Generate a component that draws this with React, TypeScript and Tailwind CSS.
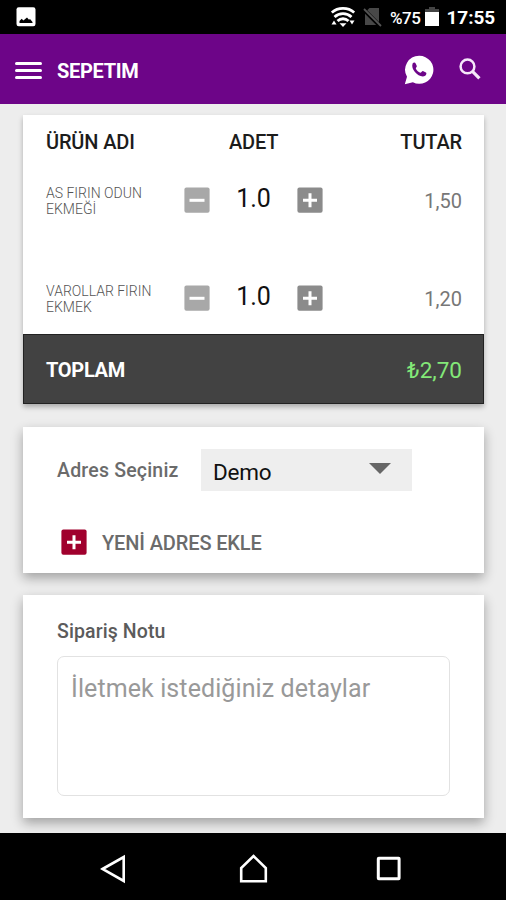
import React from "react";

const items = [
  { lines: ["AS FIRIN ODUN", "EKMEĞİ"], qty: "1.0", price: "1,50" },
  { lines: ["VAROLLAR FIRIN", "EKMEK"], qty: "1.0", price: "1,20" },
];

function Square({ kind, className }: { kind: "plus" | "minus"; className: string }) {
  return (
    <svg viewBox="0 0 26 26" className={`size-[26px] shrink-0 ${className}`}>
      <rect x="0.4" y="0.4" width="25.2" height="25.4" rx="2" fill="currentColor" />
      <path d={kind === "plus" ? "M6 13.3h14M13 6.3v14" : "M5.5 13.3h15"} stroke="#fff" strokeWidth="3" />
    </svg>
  );
}

function StatusBar() {
  return (
    <div className="flex h-[34px] shrink-0 items-center bg-black pl-4 pr-[11px] text-white">
      <svg viewBox="0 0 20 20" className="size-5">
        <rect x="0.5" y="0.3" width="19" height="19" rx="2.2" fill="#fff" />
        <path d="M3.5 16v-2l2.2-2.2 1.7 1.6L11 10.500l2 2.200 1-.8L16.500 15v1z" fill="#000" />
      </svg>
      <svg viewBox="0 0 24 20" className="ml-[295px] h-5 w-6" fill="none" stroke="#fff" strokeWidth="2.8">
        <path d="M0.800 5.600c6-5.600 16.400-5.600 22.400 0" />
        <path d="M3.500 10c4.800-4.500 12.200-4.500 17 0" />
        <path d="M6.500 14c3.200-3 7.800-3 11 0" />
        <path d="M8.500 16.200h7L12 20zM0.500 17.500l2.500-4 2.500 4zM18.500 13.500h5l-2.500 4z" fill="#fff" stroke="none" />
      </svg>
      <svg viewBox="0 0 20 20" className="ml-2 h-5 w-5">
        <path d="M6.500 1H16v17H2V5.500z" fill="#484848" />
        <path d="M0.500 2.500L17.500 19.500" stroke="#000" strokeWidth="4" />
        <path d="M1 2L18 19" stroke="#555" strokeWidth="1.800" />
      </svg>
      <span className="ml-[7px] mt-[2px] w-8 whitespace-nowrap text-[17px] font-medium leading-5 tracking-[-0.5px]">%75</span>
      <svg viewBox="0 0 14 20" className="ml-[3px] h-5 w-[14px]">
        <path d="M4 0h6v2h4v4H0V2h4z" fill="#444" />
        <path d="M0 5h14v14H0z" fill="#fff" />
      </svg>
      <span className="ml-auto mt-[2px] text-[19px] font-bold leading-5 tracking-[-0.1px]">17:55</span>
    </div>
  );
}

function Header() {
  return (
    <header className="flex h-[70px] shrink-0 items-center bg-[#6d0588] pl-[15px] pr-[25px] text-white">
      <div className="mt-[3px] flex w-[27px] flex-col gap-1">
        <i className="h-[3px] rounded-full bg-white" />
        <i className="h-[3px] rounded-full bg-white" />
        <i className="h-[3px] rounded-full bg-white" />
      </div>
      <h1 className="ml-[15px] mt-[3px] text-[20px] font-bold leading-6 tracking-[-0.3px]">SEPETIM</h1>
      <svg viewBox="0 0 30 30" className="ml-auto mt-px size-[30px]">
        <path d="M15.300 0.800a14 14 0 1 1-6.400 26.400L0.800 29.300l2.200-7.500A14 14 0 0 1 15.300 0.800z" fill="#fff" />
        <path d="M8.600 8.600c1-1.400 2.500-1.400 3.200.2l1 2.300c.2.900-.9 1.700-1 2.300.8 2 2.900 3.700 4.900 4.400.8-.2 1.300-1.800 2.200-1.700l3 1.500c1 .5.400 2.400-.7 3.200-5 3.200-15-5.500-12.600-12.200z" fill="#6d0588" />
      </svg>
      <svg viewBox="0 0 22 22" className="ml-[25px] size-[22px]" fill="none" stroke="#f6e9fa">
        <circle cx="8.500" cy="8.400" r="6.900" strokeWidth="2.500" />
        <path d="M13.200 13.200l7.200 7.200" strokeWidth="3.200" />
      </svg>
    </header>
  );
}

function Basket() {
  return (
    <section className="ml-[23px] mr-[22px] shadow-[0_3px_5px_rgba(0,0,0,0.28)]">
      <div className="h-[219px] bg-white pl-[23px] pr-[22px] pt-[15px]">
        <div className="grid grid-cols-[183px_1fr_auto] text-[20px] font-medium leading-6 tracking-[-0.15px] text-[#1c1c1c]">
          <span>ÜRÜN ADI</span>
          <span>ADET</span>
          <span>TUTAR</span>
        </div>
        <div className="pt-[30px]">
          {items.map((item) => (
            <div key={item.price} className="flex h-[98px] items-start">
              <p className="mt-px w-[138px] text-[14px] font-light leading-4 text-[#555]">
                {item.lines[0]}
                <br />
                {item.lines[1]}
              </p>
              <Square kind="minus" className="mt-[3px] text-[#a8a8a8]" />
              <span className="w-[87px] text-center text-[25px] leading-[30px] text-[#111]">{item.qty}</span>
              <Square kind="plus" className="mt-[3px] text-[#8b8b8b]" />
              <span className="ml-auto mt-[5px] text-[20px] leading-6 text-[#777]">{item.price}</span>
            </div>
          ))}
        </div>
      </div>
      <div className="flex h-[70px] items-center justify-between border border-[#222] bg-[#424242] pl-[22px] pr-[21px] pt-px">
        <span className="text-[20px] font-bold leading-6 tracking-[-0.3px] text-white">TOPLAM</span>
        <span className="text-[22.500px] leading-6 text-[#83e878]">₺2,70</span>
      </div>
    </section>
  );
}

function Address() {
  return (
    <section className="ml-[23px] mr-[22px] mt-[23px] h-[146px] bg-white pl-[34px] pt-[22px] shadow-[0_5px_11px_rgba(0,0,0,0.32)]">
      <div className="flex items-center">
        <span className="mt-[2px] w-36 text-[19.500px] font-medium leading-6 tracking-[0.2px] text-[#6b6b6b]">Adres Seçiniz</span>
        <div className="flex h-[42px] w-[211px] items-center justify-between bg-[#eee] pl-3 pr-[21px]">
          <span className="mt-[3px] text-[22.500px] leading-7 tracking-[-0.2px] text-[#111]">Demo</span>
          <svg viewBox="0 0 22 11" className="mb-[3px] h-[11px] w-[22px]">
            <path d="M0 0h22L11 11z" fill="#666" />
          </svg>
        </div>
      </div>
      <div className="mt-[38px] flex items-center pl-1">
        <Square kind="plus" className="text-[#a0002d]" />
        <span className="ml-[15px] mt-px text-[20px] font-medium leading-6 tracking-[-0.13px] text-[#6b6b6b]">YENİ ADRES EKLE</span>
      </div>
    </section>
  );
}

function Note() {
  return (
    <section className="ml-[23px] mr-[22px] mt-[22px] h-[223px] bg-white pl-[34px] pt-[25px] shadow-[0_5px_11px_rgba(0,0,0,0.32)]">
      <h2 className="text-[19.500px] font-medium leading-6 tracking-[0.1px] text-[#5b5b5b]">Sipariş Notu</h2>
      <div className="mt-3 h-[140px] w-[393px] rounded-[7px] border border-[#e2e2e2] px-[13px] pt-[17px]">
        <span className="whitespace-nowrap text-[25px] leading-[30px] tracking-[0.1px] text-[#999]">İletmek istediğiniz detaylar</span>
      </div>
    </section>
  );
}

function NavBar() {
  return (
    <nav className="flex h-[67px] shrink-0 items-center bg-black pl-[100px] pt-1">
      <svg viewBox="0 0 27 30" className="h-[30px] w-[27px]" fill="none" stroke="#fff" strokeWidth="2.600">
        <path d="M2.500 15L23.700 3v24z" />
      </svg>
      <svg viewBox="0 0 30 30" className="ml-[112px] size-[30px]" fill="none" stroke="#fff" strokeWidth="2.600">
        <path d="M2.200 27.200V14L14.500 2l12.300 12v13.200z" />
      </svg>
      <svg viewBox="0 0 26 26" className="ml-[107px] size-[26px]" fill="none" stroke="#fff" strokeWidth="3">
        <rect x="2.300" y="2.300" width="20.800" height="20.400" rx="0.500" />
      </svg>
    </nav>
  );
}

export default function App() {
  return (
    <div className="flex h-[900px] w-[506px] flex-col overflow-hidden bg-[#ededed] font-['Roboto',sans-serif]">
      <StatusBar />
      <Header />
      <main className="h-[729px] shrink-0 overflow-hidden pt-[11px]">
        <Basket />
        <Address />
        <Note />
      </main>
      <NavBar />
    </div>
  );
}
